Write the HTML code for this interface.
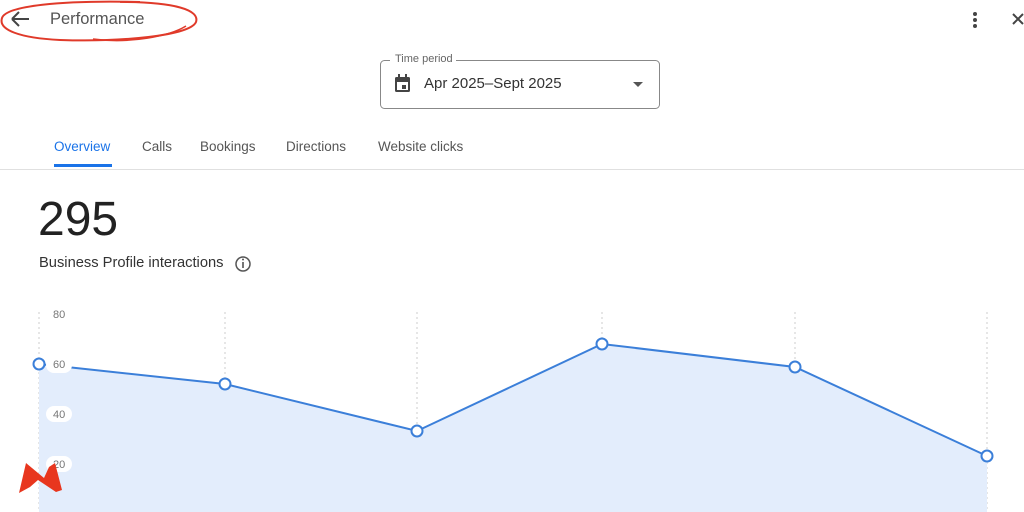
<!DOCTYPE html>
<html><head><style>
body{margin:0;width:1024px;height:512px;overflow:hidden;background:#fff;font-family:"Liberation Sans",Arial,sans-serif;position:relative}
.a{position:absolute}
</style></head><body>
<svg class="a" style="left:0;top:0" width="1024" height="512">
<path d="M12 19H29M12 19l7-7M12 19l7 7" stroke="#444" stroke-width="2" fill="none"/>
<path d="M120 2C175 2 200 10 196 22C190 36 120 42 60 40C20 38 -2 30 2 18C6 6 60 0 140 2" stroke="#e03a2a" stroke-width="2" fill="none"/>
<path d="M93 39C130 44 170 36 186 26" stroke="#e03a2a" stroke-width="1.5" fill="none"/>
<circle cx="975" cy="14" r="2" fill="#444"/><circle cx="975" cy="20" r="2" fill="#444"/><circle cx="975" cy="26" r="2" fill="#444"/>
<path d="M1013 14l10 10M1023 14l-10 10" stroke="#444" stroke-width="2"/>
<rect x="380.5" y="60.5" width="279" height="48" rx="4" fill="none" stroke="#888"/>
<rect x="390" y="55" width="66" height="10" fill="#fff"/>
<rect x="395" y="77" width="15" height="15" rx="1.5" fill="#444"/><rect x="397" y="82" width="11" height="8" fill="#fff"/><rect x="402" y="85" width="4" height="4" fill="#444"/><rect x="398" y="74" width="2" height="4" fill="#444"/><rect x="405" y="74" width="2" height="4" fill="#444"/>
<path d="M633 82h10l-5 5z" fill="#555"/>
<rect x="54" y="164" width="58" height="3" fill="#1a73e8"/>
<rect x="0" y="169" width="1024" height="1" fill="#e0e0e0"/>
<circle cx="243" cy="264" r="7" fill="none" stroke="#555" stroke-width="1.5"/><rect x="242.2" y="262" width="1.6" height="6" fill="#555"/><circle cx="243" cy="259.5" r="1" fill="#555"/>
<g stroke="#ccc" stroke-dasharray="2 3"><path d="M39 312V512M225 312V512M417 312V512M602 312V512M795 312V512M987 312V512"/></g>
<path d="M39 364L225 384L417 431L602 344L795 367L987 456V512H39Z" fill="#e3edfc"/>
<path d="M39 364L225 384L417 431L602 344L795 367L987 456" fill="none" stroke="#3b7fd9" stroke-width="2"/>
<g fill="#fff" stroke="#3b7fd9" stroke-width="2"><circle cx="39" cy="364" r="5.5"/><circle cx="225" cy="384" r="5.5"/><circle cx="417" cy="431" r="5.5"/><circle cx="602" cy="344" r="5.5"/><circle cx="795" cy="367" r="5.5"/><circle cx="987" cy="456" r="5.5"/></g>
<g fill="#fff"><rect x="46" y="357" width="26" height="16" rx="8"/><rect x="46" y="406" width="26" height="16" rx="8"/><rect x="46" y="456" width="26" height="16" rx="8"/></g>
<g font-size="11" fill="#777"><text x="53" y="318">80</text><text x="53" y="368">60</text><text x="53" y="418">40</text><text x="53" y="468">20</text></g>
<path d="M19 493L26 463L44 478L49 467L55 463L62 490L56 492L38 480L30 487Z" fill="#e8361e"/>
</svg>
<div class="a" style="left:50px;top:10px;font-size:16.5px;color:#555">Performance</div>
<div class="a" style="left:395px;top:53px;font-size:11px;color:#666">Time period</div>
<div class="a" style="left:424px;top:75px;font-size:15px;color:#333">Apr 2025–Sept 2025</div>
<div class="a" style="left:54px;top:139px;font-size:13.5px;color:#1a73e8">Overview</div>
<div class="a" style="left:142px;top:139px;font-size:13.5px;color:#555">Calls</div>
<div class="a" style="left:200px;top:139px;font-size:13.5px;color:#555">Bookings</div>
<div class="a" style="left:286px;top:139px;font-size:13.5px;color:#555">Directions</div>
<div class="a" style="left:378px;top:139px;font-size:13.5px;color:#555">Website clicks</div>
<div class="a" style="left:38px;top:192px;font-size:48px;color:#222">295</div>
<div class="a" style="left:39px;top:255px;font-size:14.7px;color:#333">Business Profile interactions</div>
</body></html>
